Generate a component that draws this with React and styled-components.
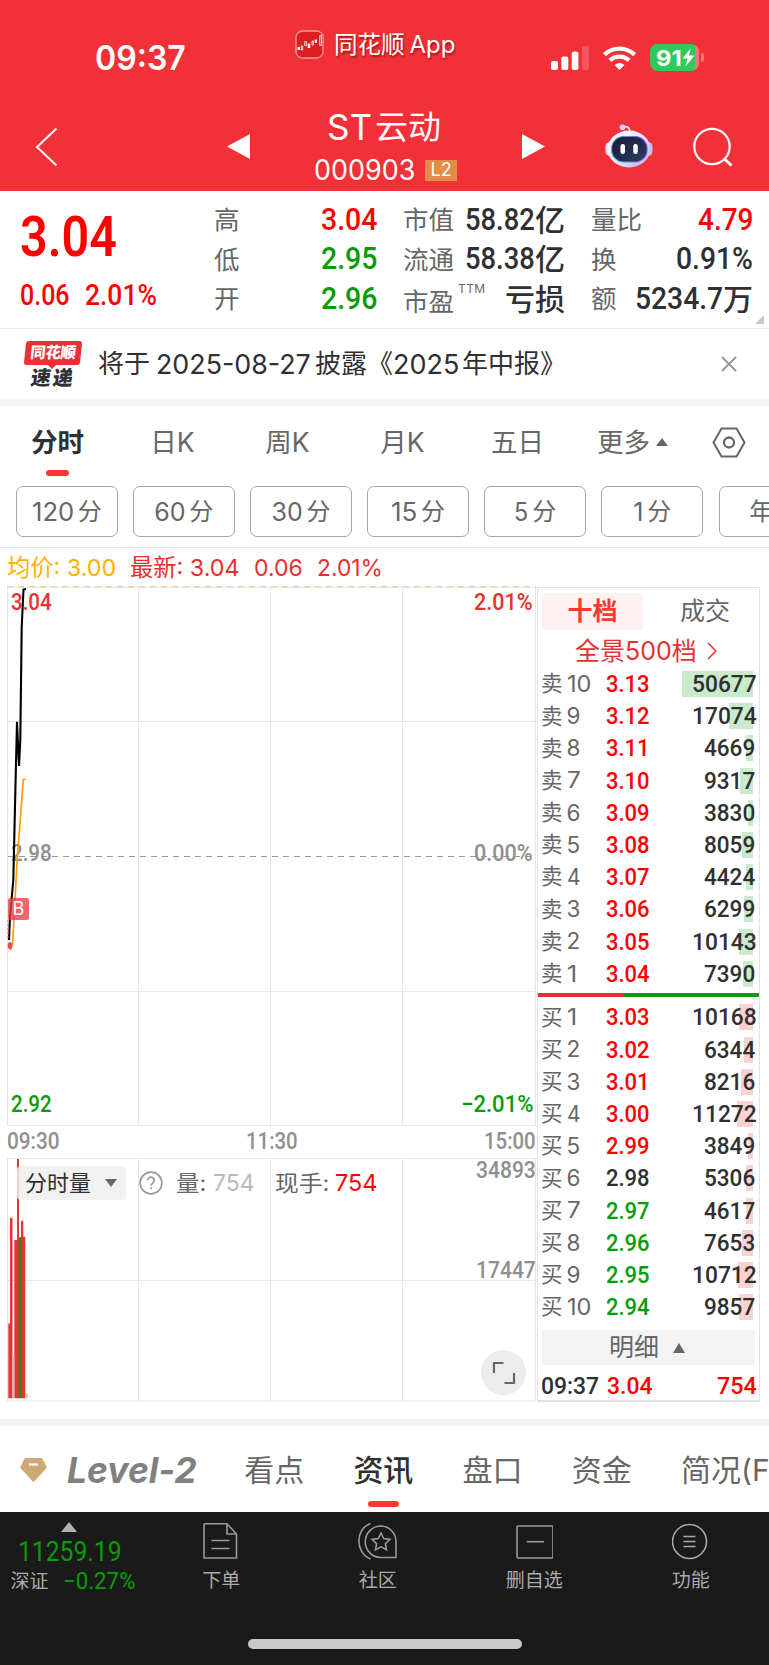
import React, { useLayoutEffect, useRef, useState } from 'react';
import styled, { createGlobalStyle, css } from 'styled-components';

const UI = '"Inter", "Noto Sans CJK SC", sans-serif';
const NUM = '"Roboto", "Noto Sans CJK SC", sans-serif';
const UP = '#ff0000';
const DOWN = '#089c08';
const INK = '#303030';
const MUTED = '#666';

const Global = createGlobalStyle`
  * { box-sizing: border-box; }
  body { margin: 0; background: #fff; font-family: ${UI}; color: ${INK}; line-height: 1; overflow: hidden; }
  svg { display: block; flex: none; }
`;

/* Text condensed or expanded to an exact width */
const FitBox = styled.span`
  display: inline-block;
  flex: none;
  white-space: nowrap;
  width: ${(p) => p.$w}px;
  font-family: ${(p) => (p.$ui ? UI : NUM)};
  font-size: ${(p) => p.$size}px;
  font-weight: ${(p) => p.$weight || 400};
  font-style: ${(p) => (p.$italic ? 'italic' : 'normal')};
  line-height: 1;
  color: ${(p) => p.$color || 'inherit'};
`;
const FitInner = styled.span`
  display: inline-block;
  transform-origin: 0 50%;
`;
function Fit({ w, size, weight, color, ui, italic, children }) {
  const ref = useRef(null);
  const [scale, setScale] = useState(1);
  useLayoutEffect(() => {
    setScale(w / ref.current.offsetWidth);
  }, [w, children]);
  return (
    <FitBox $w={w} $size={size} $weight={weight} $color={color} $ui={ui} $italic={italic}>
      <FitInner ref={ref} style={{ transform: `scaleX(${scale})` }}>{children}</FitInner>
    </FitBox>
  );
}

const Page = styled.main`
  width: 769px;
  height: 1665px;
  display: flex;
  flex-direction: column;
  overflow: hidden;
`;
const Band = styled.div`
  height: 7px;
  flex: none;
  background: #f3f3f3;
`;

/* ---------- header ---------- */
const Header = styled.header`
  height: 191px;
  flex: none;
  background: #f23037;
  color: #fff;
`;
const StatusBar = styled.div`
  height: 90px;
  display: grid;
  grid-template-columns: 295px 256px 1fr;
  align-items: start;
`;
const Clock = styled.div`
  padding: 42px 0 0 95px;
`;
const AppLink = styled.div`
  display: flex;
  align-items: center;
  gap: 10px;
  padding-top: 30px;
  text-shadow: 1px 2px 2px rgba(90, 0, 0, 0.55);
`;
const AppName = styled.span`
  display: flex;
  align-items: center;
  gap: 5px;
  font-size: 23.5px;
`;
const Signals = styled.div`
  display: flex;
  align-items: center;
  gap: 14px;
  padding-top: 44px;
`;
const Battery = styled.div`
  display: flex;
  align-items: center;
  gap: 2px;
`;
const BatteryBody = styled.div`
  width: 49px;
  height: 27px;
  border-radius: 8px;
  padding-left: 6px;
  display: flex;
  align-items: center;
  background: linear-gradient(90deg, #34c759 0 44.5px, #f67479 44.5px);
`;
const BatteryTip = styled.div`
  width: 3px;
  height: 9px;
  border-radius: 0 3px 3px 0;
  background: #f67479;
`;
const NavBar = styled.div`
  height: 101px;
  display: grid;
  grid-template-columns: 226px 88px 144px 65px 82px 88px 1fr;
  align-items: start;
`;
const NavItem = styled.div`
  padding: ${(p) => p.$top}px 0 0 ${(p) => p.$left || 0}px;
`;
const Title = styled.div`
  display: flex;
  justify-content: center;
  align-items: center;
  gap: 3px;
  height: 34px;
  margin: 20px 4px 0 0;
  font-size: 33px;
`;
const Code = styled.div`
  display: flex;
  align-items: center;
  gap: 10px;
  height: 30px;
  margin-top: 11px;
`;
const LevelBadge = styled.span`
  width: 32px;
  height: 21px;
  background: #e28c48;
  display: flex;
  align-items: center;
  justify-content: center;
`;

/* ---------- quote ---------- */
const Quote = styled.section`
  height: 138px;
  flex: none;
  border-bottom: 1px solid #e6e6e6;
  display: grid;
  grid-template-columns: 194px 163px 188px 188px 1fr;
  padding-left: 20px;
  position: relative;
`;
const PriceBlock = styled.div`
  padding-top: 18px;
`;
const Change = styled.div`
  display: flex;
  gap: 15px;
  margin-top: 16px;
`;
const Stats = styled.div`
  display: flex;
  flex-direction: column;
  padding: 9px 0 0 ${(p) => p.$left || 0}px;
`;
const StatRow = styled.div`
  height: 39.5px;
  display: flex;
  align-items: center;
  justify-content: space-between;
  white-space: nowrap;
`;
const StatLabel = styled.span`
  display: flex;
  font-size: 25.5px;
  color: ${MUTED};
  padding-top: ${(p) => (p.$low ? 5 : 0)}px;
`;
const Ttm = styled.sup`
  font-size: 12px;
  letter-spacing: 0.4px;
  margin: -6px 0 0 4px;
  line-height: 1;
`;
const StatValue = styled.span`
  display: flex;
  align-items: center;
  color: ${(p) => p.$color || INK};
  font-size: 30px;
  font-weight: 500;
`;
const Corner = styled.i`
  position: absolute;
  right: 5px;
  bottom: 4px;
  border-left: 9px solid transparent;
  border-bottom: 9px solid #c8c8c8;
`;

/* ---------- news ---------- */
const News = styled.section`
  height: 70px;
  flex: none;
  display: flex;
  align-items: center;
  padding: 0 32px 0 24px;
`;
const Brand = styled.div`
  width: 58px;
  margin-right: 16px;
  display: flex;
  flex-direction: column;
  align-items: flex-start;
  position: relative;
`;
const BrandTop = styled.div`
  width: 56px;
  height: 24px;
  margin-left: 1px;
  background: #e93036;
  border-radius: 3px;
  transform: skewX(-6deg);
  color: #fff;
  display: flex;
  align-items: center;
  justify-content: center;
  font-size: 15.5px;
  font-weight: 900;
  letter-spacing: -0.4px;
`;
const BrandBottom = styled.div`
  margin: 3px 0 0 7px;
  font-size: 20px;
  font-weight: 900;
  letter-spacing: 2px;
  transform: skewX(-8deg);
`;
const BrandNotch = styled.i`
  position: absolute;
  left: 24px;
  top: 24px;
  border: 4px solid transparent;
  border-top-color: #e93036;
  border-bottom: 0;
`;
const NewsText = styled.div`
  flex: 1;
  display: flex;
  align-items: center;
  font-size: 26px;
`;
const Gap = styled.span`
  flex: none;
  width: ${(p) => p.$w}px;
`;

/* ---------- period tabs ---------- */
const Periods = styled.nav`
  height: 80px;
  flex: none;
  display: flex;
`;
const Period = styled.div`
  width: 115px;
  flex: none;
  height: 72px;
  display: flex;
  align-items: center;
  justify-content: center;
  gap: 6px;
  font-size: 26.5px;
  color: ${MUTED};
  position: relative;
  ${(p) => p.$active && css`
    color: ${INK};
    font-weight: 700;
    &::after {
      content: '';
      position: absolute;
      left: 46px;
      bottom: 2px;
      width: 23px;
      height: 6px;
      border-radius: 3px;
      background: #fc392f;
    }
  `}
`;
const Caret = styled.i`
  border: ${(p) => p.$half}px solid transparent;
  ${(p) => (p.$down
    ? css`border-top: ${p.$h}px solid ${p.$color}; border-bottom: 0;`
    : css`border-bottom: ${p.$h}px solid ${p.$color}; border-top: 0;`)}
`;
const Pills = styled.div`
  height: 62px;
  flex: none;
  display: flex;
  gap: 15.6px;
  padding: 0 0 11px 16px;
  border-bottom: 1px solid #e6e6e6;
`;
const Pill = styled.div`
  width: 101.5px;
  height: 51px;
  flex: none;
  border: 1px solid #a6a6a6;
  border-radius: 7px;
  display: flex;
  align-items: center;
  justify-content: center;
  gap: 4px;
  padding-top: 1px;
  font-size: 24px;
  color: ${MUTED};
`;
const Legend = styled.div`
  height: 38px;
  flex: none;
  display: flex;
  align-items: center;
  padding: 2px 0 0 7px;
  gap: 14px;
  color: #e93030;
`;

/* ---------- chart + order book ---------- */
const Market = styled.section`
  height: 833px;
  flex: none;
  display: flex;
  gap: 1px;
  padding-left: 7px;
  align-items: flex-start;
`;
const Charts = styled.div`
  width: 529px;
  display: flex;
  flex-direction: column;
`;
const PriceChart = styled.div`
  position: relative;
  height: 540px;
`;
const VolumeChart = styled.div`
  position: relative;
  height: 244px;
`;
const Mark = styled.span`
  position: absolute;
  display: flex;
  top: ${(p) => p.$y - 11}px;
  ${(p) => (p.$left !== undefined ? `left: ${p.$left}px;` : `right: ${p.$right}px;`)}
`;
const BuyBadge = styled.span`
  position: absolute;
  left: 1px;
  top: 312px;
  width: 21px;
  height: 22px;
  border-radius: 2px;
  background: rgba(236, 62, 66, 0.78);
  color: #fff;
  font-size: 18px;
  display: flex;
  align-items: center;
  justify-content: center;
`;
const TimeAxis = styled.div`
  height: 32px;
  display: flex;
  align-items: center;
  justify-content: space-between;
  color: #8f8f8f;
`;
const VolumeTools = styled.div`
  position: absolute;
  left: 10px;
  top: 8px;
  height: 34px;
  display: flex;
  align-items: center;
  color: ${MUTED};
  font-size: 22px;
`;
const VolumeSelect = styled.div`
  width: 109px;
  height: 34px;
  padding: 0 9px 0 8px;
  border-radius: 4px;
  background: rgba(238, 238, 238, 0.82);
  display: flex;
  align-items: center;
  justify-content: space-between;
  color: ${INK};
`;
const Expand = styled.div`
  position: absolute;
  right: 10px;
  bottom: 7px;
  width: 45px;
  height: 45px;
  border-radius: 50%;
  background: #ececec;
  display: flex;
  align-items: center;
  justify-content: center;
`;
const Book = styled.aside`
  width: 223px;
  height: 815px;
  flex: none;
  margin-top: 1px;
  border: 1px solid #e2e2e2;
  border-bottom-width: 2px;
  display: flex;
  flex-direction: column;
`;
const BookTabs = styled.div`
  display: flex;
  padding: 5px 0 0 4px;
`;
const BookTab = styled.div`
  width: ${(p) => (p.$active ? 101 : 116)}px;
  margin-left: ${(p) => (p.$active ? 0 : 4)}px;
  flex: none;
  height: 37px;
  border-radius: 3px;
  display: flex;
  align-items: center;
  justify-content: center;
  font-size: 25px;
  color: ${(p) => (p.$active ? '#fc392f' : MUTED)};
  font-weight: ${(p) => (p.$active ? 700 : 400)};
  background: ${(p) => (p.$active ? '#fff1f1' : 'none')};
`;
const Panorama = styled.div`
  height: 38px;
  display: flex;
  align-items: center;
  gap: 10px;
  padding: 4px 0 0 37px;
  color: #e93030;
`;
const BookRow = styled.div`
  height: 32.2px;
  flex: none;
  display: grid;
  grid-template-columns: 65px 1fr auto;
  align-items: center;
  padding: 0 3px;
  position: relative;
`;
const RankLabel = styled.span`
  display: flex;
  align-items: center;
  gap: 4px;
  font-size: 21.5px;
  color: ${MUTED};
`;
const Depth = styled.i`
  position: absolute;
  right: 6px;
  top: 3px;
  height: 26px;
  background: ${(p) => (p.$buy ? '#fad2d4' : '#c9eacb')};
`;
const Amount = styled.span`
  position: relative;
  display: flex;
`;
const Balance = styled.div`
  height: 4px;
  flex: none;
  margin: 3.5px 0 4px;
  background: linear-gradient(90deg, #e93030 0 86.5px, #089c08 86.5px);
`;
const DetailBar = styled.div`
  height: 35px;
  flex: none;
  margin: 7px 4px 0;
  background: #f3f3f3;
  color: ${MUTED};
  display: flex;
  align-items: center;
  justify-content: center;
  gap: 14px;
  padding-right: 3px;
  font-size: 25px;
`;
const Tick = styled.div`
  height: 34px;
  display: flex;
  align-items: center;
  padding: 7px 3px 0 3px;
`;

/* ---------- content tabs ---------- */
const Sections = styled.nav`
  height: 86px;
  flex: none;
  display: flex;
  align-items: flex-start;
  padding: 24px 0 0 20px;
  gap: 49.2px;
`;
const LevelTab = styled.div`
  height: 40px;
  display: flex;
  align-items: center;
  gap: 20px;
  margin-right: -2px;
`;
const Section = styled.div`
  flex: none;
  height: 57px;
  padding-top: 5px;
  font-size: 30px;
  white-space: nowrap;
  color: ${(p) => (p.$active ? INK : MUTED)};
  font-weight: ${(p) => (p.$active ? 500 : 400)};
  display: flex;
  flex-direction: column;
  align-items: center;
  justify-content: space-between;
`;
const Underline = styled.i`
  width: 31px;
  height: 6px;
  border-radius: 3px;
  background: #fc392f;
`;

/* ---------- bottom bar ---------- */
const Bottom = styled.footer`
  height: 153px;
  flex: none;
  background: #1a1a1a;
  color: #aaa;
  display: flex;
  flex-direction: column;
`;
const Actions = styled.div`
  height: 127px;
  display: grid;
  grid-template-columns: 143px repeat(4, 1fr);
`;
const Index = styled.div`
  display: flex;
  flex-direction: column;
  align-items: center;
  padding: 10px 6px 0 0;
`;
const IndexValue = styled.div`
  display: flex;
  margin: 6px 0 0 3px;
`;
const IndexChange = styled.div`
  display: flex;
  align-items: center;
  gap: 14px;
  margin: 4px 0 0 8px;
  font-size: 19px;
`;
const Action = styled.div`
  display: flex;
  flex-direction: column;
  align-items: center;
  padding-top: 10px;
  gap: 11px;
  font-size: 19px;
`;
const HomeBar = styled.div`
  width: 274px;
  height: 10px;
  border-radius: 5px;
  background: #c9c9c9;
  align-self: center;
`;

const asks = [
  ['10', '3.13', '50677', 71], ['9', '3.12', '17074', 24], ['8', '3.11', '4669', 7],
  ['7', '3.10', '9317', 13], ['6', '3.09', '3830', 5], ['5', '3.08', '8059', 11],
  ['4', '3.07', '4424', 7], ['3', '3.06', '6299', 9], ['2', '3.05', '10143', 14], ['1', '3.04', '7390', 10.5],
];
const bids = [
  ['1', '3.03', '10168', 14], ['2', '3.02', '6344', 9], ['3', '3.01', '8216', 12],
  ['4', '3.00', '11272', 16], ['5', '2.99', '3849', 5], ['6', '2.98', '5306', 7],
  ['7', '2.97', '4617', 7], ['8', '2.96', '7653', 11], ['9', '2.95', '10712', 15], ['10', '2.94', '9857', 14],
];
const priceColor = (v) => (v > 2.98 ? UP : v < 2.98 ? DOWN : INK);

function Order({ side, row }) {
  const [rank, price, amount, depth] = row;
  return (
    <BookRow>
      <Depth $buy={side === '买'} style={{ width: depth }} />
      <RankLabel>{side}<Fit ui size={22.5} w={rank.length > 1 ? 24 : rank === '1' ? 10 : 14}>{rank}</Fit></RankLabel>
      <Fit size={24} weight={500} w={44} color={priceColor(Number(price))}>{price}</Fit>
      <Amount><Fit size={24} weight={500} w={amount.length * 12.9}>{amount}</Fit></Amount>
    </BookRow>
  );
}

const AppIcon = () => (
  <svg width="29" height="29" viewBox="0 0 29 29" fill="none" stroke="#fff">
    <rect x="1" y="1" width="27" height="27" rx="6.5" fill="#dc1f22" stroke="#f79a9c" strokeWidth="1.3" />
    <path d="M2.5 17h2.5v3H2.5zM12.7 13.5h2.5v4.5h-2.5zM19.7 9.5h2.3v3.5h-2.3z" fill="#fff" stroke="none" />
    <path d="M6.3 16h1.4v4H6.3zM9.8 11.5h1.6v4H9.8zM17 11h1.4v4H17zM24.7 5.5h1.6v10h-1.6z" strokeWidth=".8" />
  </svg>
);
const CellIcon = () => (
  <svg width="38" height="24" viewBox="0 0 38 24" fill="#fff">
    <rect x="0" y="15" width="7" height="9" rx="2" />
    <rect x="10.3" y="10.5" width="7" height="13.5" rx="2" />
    <rect x="20.7" y="5.5" width="6.7" height="18.5" rx="2" />
    <rect x="31" y="0" width="7" height="24" rx="2" opacity=".2" />
  </svg>
);
const WifiIcon = () => (
  <svg width="33" height="24" viewBox="0 0 33 24" fill="none" stroke="#fff" strokeWidth="4.3">
    <path d="M1.4 8.7a22 22 0 0 1 30.2 0M6.9 14.4a14.3 14.3 0 0 1 19.2 0" />
    <path d="M11.5 19a8 8 0 0 1 10 0l-5 5z" fill="#fff" stroke="none" />
  </svg>
);
const Robot = () => (
  <svg width="48" height="45" viewBox="0 0 48 45">
    <defs>
      <linearGradient id="shell" x1="0" y1="0" x2="1" y2="1"><stop offset="0" stopColor="#fff" /><stop offset=".55" stopColor="#e7e2ff" /><stop offset="1" stopColor="#a9b4df" /></linearGradient>
      <linearGradient id="face" x1="0" y1="0" x2="1" y2="1"><stop offset="0" stopColor="#171b36" /><stop offset=".6" stopColor="#22304f" /><stop offset="1" stopColor="#343a61" /></linearGradient>
      <linearGradient id="rim" x1="0" x2="1"><stop offset="0" stopColor="#53bdd8" /><stop offset="1" stopColor="#8a3cf0" /></linearGradient>
    </defs>
    <path d="M17 3.5c5-2 8 0 7.700 4" fill="none" stroke="#ece8fa" strokeWidth="1.7" />
    <circle cx="17.5" cy="3.2" r="2.8" fill="#ddd8f2" />
    <rect x=".5" y="18" width="9" height="14" rx="4.5" fill="#dcdcf5" />
    <rect x="38.5" y="18" width="9" height="14" rx="4.5" fill="#bfbdea" />
    <ellipse cx="24" cy="25" rx="21.5" ry="18.5" fill="url(#shell)" />
    <rect x="6.500" y="12.5" width="35.5" height="25.5" rx="12" fill="url(#face)" stroke="url(#rim)" strokeWidth="1.1" />
    <rect x="15.5" y="20" width="4.5" height="10" rx="2.2" fill="#fff" />
    <rect x="28.3" y="20" width="4.5" height="10" rx="2.2" fill="#fff" />
  </svg>
);

function PriceDrawing() {
  return (
    <svg width="529" height="540" viewBox="7 586 529 540" fill="none">
      <g stroke="#e6e6e6">
        <path d="M138.5 587V1125M270.5 587V1125M402.5 587V1125M8 721.5H535M8 991.5H535" />
        <path d="M7 587.5H535.5V1125.5H7.5V587.5" strokeWidth="1.2" />
      </g>
      <path d="M7 586.7H536" stroke="#e9cfa4" strokeWidth="1.3" strokeDasharray="6 5" />
      <path d="M8 856.5H535" stroke="#999" strokeDasharray="6 5" />
    </svg>
  );
}
const PriceLines = styled.svg`
  position: absolute;
  left: 0;
  top: 0;
`;
function VolumeDrawing() {
  return (
    <svg width="529" height="244" viewBox="7 1158 529 244">
      <g stroke="#e6e6e6" fill="none">
        <path d="M138.5 1158V1401M270.5 1158V1401M402.5 1158V1401M8 1280.5H535" />
        <path d="M7.5 1158.5H535.5V1401H7.5z" strokeWidth="1.2" />
      </g>
      <g fill="#e93232">
        <path d="M8.3 1323.5H10V1217.7H12.5V1398.3H8.3z" />
        <path d="M14.3 1240H17V1159H19V1398.3H14.3z" />
        <path d="M21 1220.7H23.3V1236.7H25.3V1398.3H21z" />
      </g>
      <path d="M18.7 1237.3H21.3V1398.3H18.7z" fill="#2a8a1e" />
      <path d="M12.5 1355.7H14.3V1398.3H12.5zM25.5 1393.3H27.5V1398.3H25.5z" fill="#c4c0c0" />
    </svg>
  );
}

export default function App() {
  return (
    <Page>
      <Global />
      <Header>
        <StatusBar>
          <Clock><Fit ui size={33.5} weight={600} w={91}>09:37</Fit></Clock>
          <AppLink><AppIcon /><AppName>同花顺<Fit ui size={24} w={46}>App</Fit></AppName></AppLink>
          <Signals>
            <CellIcon />
            <WifiIcon />
            <Battery>
              <BatteryBody>
                <Fit ui size={22} weight={700} w={26}>91</Fit>
                <svg width="13" height="19" viewBox="0 0 13 19" fill="#fff"><path d="M8.5.5.5 10.5H5.5L3.5 18.5 12.5 7.5H7z" /></svg>
              </BatteryBody>
              <BatteryTip />
            </Battery>
          </Signals>
        </StatusBar>
        <NavBar>
          <NavItem $top={37} $left={35}>
            <svg width="23" height="40" viewBox="0 0 23 40" fill="none" stroke="#fff" strokeWidth="2"><path d="M21.5 1.5 2 20 21.5 38.5" /></svg>
          </NavItem>
          <NavItem $top={44} $left={1}>
            <svg width="23" height="25" viewBox="0 0 23 25" fill="#fff"><path d="M23 0V25L0 12.5z" /></svg>
          </NavItem>
          <div>
            <Title><Fit ui size={35} w={45}>ST</Fit><span>云动</span></Title>
            <Code>
              <Fit ui size={28} w={101}>000903</Fit>
              <LevelBadge><Fit ui size={18} w={21}>L2</Fit></LevelBadge>
            </Code>
          </div>
          <NavItem $top={44} $left={64}>
            <svg width="23" height="25" viewBox="0 0 23 25" fill="#fff"><path d="M0 0V25L23 12.5z" /></svg>
          </NavItem>
          <NavItem $top={34} $left={82}><Robot /></NavItem>
          <NavItem $top={37} $left={88}>
            <svg width="40" height="40" viewBox="0 0 40 40" fill="none" stroke="#fff" strokeWidth="2.2"><circle cx="19" cy="19.5" r="17.7" /><path d="M31 31.5 38.5 38.5" strokeWidth="3" /></svg>
          </NavItem>
        </NavBar>
      </Header>

      <Quote>
        <PriceBlock>
          <Fit size={56} weight={600} w={97} color={UP}>3.04</Fit>
          <Change>
            <Fit size={29} weight={500} w={50} color={UP}>0.06</Fit>
            <Fit size={29} weight={500} w={72} color={UP}>2.01%</Fit>
          </Change>
        </PriceBlock>
        <Stats>
          <StatRow><StatLabel>高</StatLabel><StatValue><Fit size={30.5} weight={500} w={56} color={UP}>3.04</Fit></StatValue></StatRow>
          <StatRow><StatLabel>低</StatLabel><StatValue><Fit size={30.5} weight={500} w={56} color={DOWN}>2.95</Fit></StatValue></StatRow>
          <StatRow><StatLabel>开</StatLabel><StatValue><Fit size={30.5} weight={500} w={56} color={DOWN}>2.96</Fit></StatValue></StatRow>
        </Stats>
        <Stats $left={26}>
          <StatRow><StatLabel>市值</StatLabel><StatValue><Fit size={30.5} weight={500} w={70}>58.82</Fit>亿</StatValue></StatRow>
          <StatRow><StatLabel>流通</StatLabel><StatValue><Fit size={30.5} weight={500} w={70}>58.38</Fit>亿</StatValue></StatRow>
          <StatRow><StatLabel $low>市盈<Ttm>TTM</Ttm></StatLabel><StatValue>亏损</StatValue></StatRow>
        </Stats>
        <Stats $left={26}>
          <StatRow><StatLabel>量比</StatLabel><StatValue><Fit size={30.5} weight={500} w={55} color={UP}>4.79</Fit></StatValue></StatRow>
          <StatRow><StatLabel>换</StatLabel><StatValue><Fit size={30.5} weight={500} w={77}>0.91%</Fit></StatValue></StatRow>
          <StatRow><StatLabel>额</StatLabel><StatValue><Fit size={30.5} weight={500} w={88}>5234.7</Fit>万</StatValue></StatRow>
        </Stats>
        <Corner />
      </Quote>

      <News>
        <Brand><BrandTop>同花顺</BrandTop><BrandNotch /><BrandBottom>速递</BrandBottom></Brand>
        <NewsText>
          将于<Gap $w={6} /><Fit ui size={27} w={155}>2025-08-27</Fit><Gap $w={4} />披露《<Fit ui size={27} w={66}>2025</Fit><Gap $w={3} />年中报》
        </NewsText>
        <svg width="16" height="16" viewBox="0 0 16 16" stroke="#999" strokeWidth="2"><path d="M1 1 15 15M15 1 1 15" /></svg>
      </News>
      <Band />

      <Periods>
        <Period $active>分时</Period>
        <Period>日K</Period>
        <Period>周K</Period>
        <Period>月K</Period>
        <Period>五日</Period>
        <Period>更多<Caret $half={6} $h={8} $color={MUTED} /></Period>
        <Period>
          <svg width="34" height="31" viewBox="0 0 34 31" fill="none" stroke="#666" strokeWidth="2"><path d="M9.5 1.5H24.5L32.5 15.5 24.5 29.5H9.5L1.5 15.5z" /><circle cx="17" cy="15.5" r="5" strokeWidth="2.3" /></svg>
          <Gap $w={31} />
        </Period>
      </Periods>
      <Pills>
        {[['120', 42], ['60', 31], ['30', 31], ['15', 26], ['5', 14], ['1', 10]].map(([n, w]) => (
          <Pill key={n}><Fit ui size={25} w={w}>{n}</Fit>分</Pill>
        ))}
        <Pill>年K</Pill>
      </Pills>
      <Legend>
        <Fit ui size={23.5} w={109} color="#ffb000">均价: 3.00</Fit>
        <Fit ui size={23.5} w={110}>最新: 3.04</Fit>
        <Fit ui size={23.5} w={49}>0.06</Fit>
        <Fit ui size={23.5} w={66}>2.01%</Fit>
      </Legend>

      <Market>
        <Charts>
          <PriceChart>
            <PriceDrawing />
            <Mark $left={4} $y={16}><Fit size={23} weight={500} w={41} color="#e93030">3.04</Fit></Mark>
            <Mark $left={4} $y={267}><Fit size={23} weight={500} w={41} color="#8f8f8f">2.98</Fit></Mark>
            <Mark $left={4} $y={518}><Fit size={23} weight={500} w={41} color={DOWN}>2.92</Fit></Mark>
            <Mark $right={3} $y={16}><Fit size={23} weight={500} w={59} color="#e93030">2.01%</Fit></Mark>
            <Mark $right={3} $y={267}><Fit size={23} weight={500} w={59} color="#8f8f8f">0.00%</Fit></Mark>
            <Mark $right={3} $y={518}><Fit size={23} weight={500} w={72} color={DOWN}>−2.01%</Fit></Mark>
            <PriceLines width="40" height="400" viewBox="7 586 40 400" fill="none">
              <path d="M10.3 950 12.7 943 14.3 913 17 863 23.3 779.5 25.7 779" stroke="#ff9c08" strokeWidth="1.700" />
              <path d="M9 940 10 917 13.3 880 15.3 793 17 721.7 19 766 20.3 740 21.7 627 23.5 589.5 26 589" stroke="#000" strokeWidth="2.1" />
              <ellipse cx="10" cy="945.7" rx="2.3" ry="3.6" fill="#ee4d50" />
              <path d="M8 920V940" stroke="#ee4d50" strokeDasharray="2 2" />
            </PriceLines>
            <BuyBadge>B</BuyBadge>
          </PriceChart>
          <TimeAxis>
            <Fit size={23.5} weight={500} w={53}>09:30</Fit>
            <Fit size={23.5} weight={500} w={52}>11:30</Fit>
            <Fit size={23.5} weight={500} w={52}>15:00</Fit>
          </TimeAxis>
          <VolumeChart>
            <VolumeDrawing />
            <VolumeTools>
              <VolumeSelect>分时量<Caret $down $half={6} $h={8} $color={MUTED} /></VolumeSelect>
              <Gap $w={13} />
              <svg width="24" height="24" viewBox="0 0 24 24" fill="none" stroke="#999" strokeWidth="1.7"><circle cx="12" cy="12" r="10.9" /><path d="M8.7 9.3a3.3 3.3 0 1 1 5 2.9c-1.2.8-1.7 1.3-1.7 2.6" /><path d="M12 16.3V18.3" /></svg>
              <Gap $w={13} />
              <Fit ui size={22} w={30}>量:</Fit>
              <Gap $w={7} />
              <Fit ui size={23.5} w={42} color="#b9b9b9">754</Fit>
              <Gap $w={20} />
              <Fit ui size={22} w={54}>现手:</Fit>
              <Gap $w={6} />
              <Fit ui size={23.5} w={43} color={UP}>754</Fit>
            </VolumeTools>
            <Mark $right={0} $y={12}><Fit size={23.5} weight={500} w={60} color="#8f8f8f">34893</Fit></Mark>
            <Mark $right={0} $y={112}><Fit size={23.5} weight={500} w={60} color="#8f8f8f">17447</Fit></Mark>
            <Expand>
              <svg width="24" height="24" viewBox="0 0 24 24" fill="none" stroke="#666" strokeWidth="2.2"><path d="M2 12V2H11.5M22 12V22H12.5" /></svg>
            </Expand>
          </VolumeChart>
        </Charts>

        <Book>
          <BookTabs><BookTab $active>十档</BookTab><BookTab>成交</BookTab></BookTabs>
          <Panorama>
            <Fit ui size={25} w={122}>全景500档</Fit>
            <svg width="10" height="18" viewBox="0 0 10 18" fill="none" stroke="#e93030" strokeWidth="1.5"><path d="M1 1 9 9 1 17" /></svg>
          </Panorama>
          {asks.map((r) => <Order key={r[0]} side="卖" row={r} />)}
          <Balance />
          {bids.map((r) => <Order key={r[0]} side="买" row={r} />)}
          <DetailBar>明细<Caret $half={6.5} $h={10} $color={MUTED} /></DetailBar>
          <Tick>
            <Fit size={24.5} weight={500} w={58}>09:37</Fit>
            <Gap $w={8} />
            <Fit size={24.5} weight={500} w={46} color={UP}>3.04</Fit>
            <Gap $w={64} />
            <Fit size={24.5} weight={500} w={40} color={UP}>754</Fit>
          </Tick>
        </Book>
      </Market>
      <Band />

      <Sections>
        <LevelTab>
          <svg width="27" height="24" viewBox="0 0 27 24"><path d="M6 0H21Q22 0 22.5.7L26.5 8.5Q27 9.5 26.3 10.3L14.5 23.2Q13.5 24 12.5 23.2L.7 10.3Q0 9.5.5 8.5L4.5.7Q5 0 6 0z" fill="#cfa973" /><path d="M9 6.5H18" stroke="#fff" strokeWidth="2.2" /></svg>
          <Fit ui italic size={36} weight={700} w={130} color="#808080">Level-2</Fit>
        </LevelTab>
        <Section>看点</Section>
        <Section $active>资讯<Underline /></Section>
        <Section>盘口</Section>
        <Section>资金</Section>
        <Section>简况(F10)</Section>
      </Sections>

      <Bottom>
        <Actions>
          <Index>
            <Caret $half={8.5} $h={10} $color="#b3b3b3" />
            <IndexValue><Fit size={28} w={104} color={DOWN}>11259.19</Fit></IndexValue>
            <IndexChange>深证<Fit size={23.5} w={72} color={DOWN}>−0.27%</Fit></IndexChange>
          </Index>
          <Action>
            <svg width="38" height="38" viewBox="0 0 38 38" fill="none" stroke="#999" strokeWidth="1.6"><path d="M3 1.8H25L34.5 12V36H2V2.8Q2 1.8 3 1.8zM25 2V12H34.5M9.5 18.5H27.5M9.5 26.5H27.5" /></svg>
            下单
          </Action>
          <Action>
            <svg width="42" height="38" viewBox="0 0 42 38" fill="none" stroke="#999" strokeWidth="1.6"><path d="M13.5 1.5C-2 7-2 31 13.5 37" /><path d="M24 4A15.5 15.5 0 1 0 24 35.5H39V19.5A15.5 15.5 0 0 0 24 4z" /><path d="m24 11 2.7 5.6 6.2.8-4.5 4.3 1.1 6.1L24 24.8l-5.5 3 1.1-6.1-4.5-4.3 6.2-.8z" /></svg>
            社区
          </Action>
          <Action>
            <svg width="38" height="38" viewBox="0 0 38 38" fill="none" stroke="#999" strokeWidth="1.6"><rect x="2" y="4" width="36" height="32" rx="1" /><path d="M11.5 19.7H29" /></svg>
            删自选
          </Action>
          <Action>
            <svg width="38" height="38" viewBox="0 0 38 38" fill="none" stroke="#aaa" strokeWidth="1.6"><circle cx="17.5" cy="19.5" r="17" /><path d="M11.5 14.5H23.5M11.5 19.5H23.5M11.5 24.5H23.5" /></svg>
            功能
          </Action>
        </Actions>
        <HomeBar />
      </Bottom>
    </Page>
  );
}
